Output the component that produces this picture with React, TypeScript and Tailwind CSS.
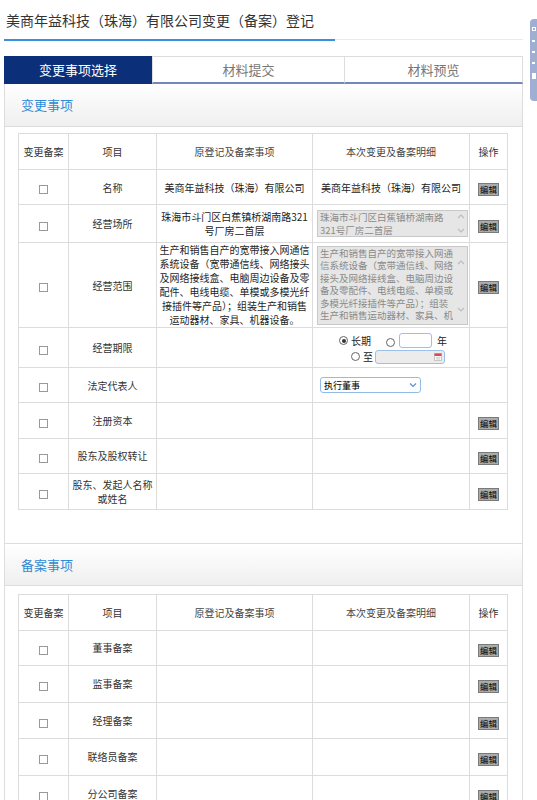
import React from "react";

const cell = "border border-[#dcdcdc] text-center align-middle p-0";

function Checkbox() {
  return <span className="inline-block w-[9px] h-[9px] border border-[#999] bg-white align-middle" />;
}

function EditBtn() {
  return (
    <span className="inline-flex items-center justify-center w-[21px] h-[13px] bg-[#ababab] border border-[#7a7a7a] text-[8.5px] leading-none text-black align-middle">
      编辑
    </span>
  );
}

function Radio({ checked }: { checked?: boolean }) {
  return (
    <span className="inline-flex items-center justify-center w-[9px] h-[9px] rounded-full border border-[#666] bg-white align-middle">
      {checked ? <span className="w-[4px] h-[4px] rounded-full bg-[#333]" /> : null}
    </span>
  );
}

function ScrollArrows({ upTop, downTop }: { upTop: string; downTop: string }) {
  return (
    <>
      <svg className={`absolute right-[2px] ${upTop}`} width="8" height="6" viewBox="0 0 8 6">
        <path d="M1 5 L4 2 L7 5" fill="none" stroke="#bdbdbd" strokeWidth="1.2" />
      </svg>
      <svg className={`absolute right-[2px] ${downTop}`} width="8" height="6" viewBox="0 0 8 6">
        <path d="M1 1 L4 4 L7 1" fill="none" stroke="#bdbdbd" strokeWidth="1.2" />
      </svg>
    </>
  );
}

function Header() {
  return (
    <tr className="h-[36px]">
      <td className={`${cell} text-[10px] text-[#333]`}>变更备案</td>
      <td className={`${cell} text-[10px] text-[#333]`}>项目</td>
      <td className={`${cell} text-[10px] text-[#444]`}>原登记及备案事项</td>
      <td className={`${cell} text-[10px] text-[#444]`}>本次变更及备案明细</td>
      <td className={`${cell} text-[10px] text-[#333]`}>操作</td>
    </tr>
  );
}

function Cols() {
  return (
    <colgroup>
      <col className="w-[50px]" />
      <col className="w-[88px]" />
      <col className="w-[156px]" />
      <col className="w-[157px]" />
      <col className="w-[38px]" />
    </colgroup>
  );
}

function SimpleRow({ label, h, edit = true }: { label: React.ReactNode; h: string; edit?: boolean }) {
  return (
    <tr className={h}>
      <td className={cell}><Checkbox /></td>
      <td className={`${cell} text-[10px] leading-[14px] text-[#333]`}>{label}</td>
      <td className={cell}></td>
      <td className={cell}></td>
      <td className={cell}>{edit ? <EditBtn /> : null}</td>
    </tr>
  );
}

function SectionBand({ title, top }: { title: string; top?: boolean }) {
  return (
    <div
      className={`h-[43px] flex items-center pl-[16px] bg-gradient-to-b from-white to-[#efefef] border-b border-[#dddddd] ${top ? "border-t" : ""}`}
    >
      <span className="text-[13px] text-[#2f8ad6]">{title}</span>
    </div>
  );
}

export default function App() {
  const scopeOrig = [
    "生产和销售自产的宽带接入网通信",
    "系统设备（宽带通信线、网络接头",
    "及网络接线盒、电脑周边设备及零",
    "配件、电线电缆、单模或多模光纤",
    "接插件等产品）；组装生产和销售",
    "运动器材、家具、机器设备。",
  ];
  const scopeNew = [
    "生产和销售自产的宽带接入网通",
    "信系统设备（宽带通信线、网络",
    "接头及网络接线盒、电脑周边设",
    "备及零配件、电线电缆、单模或",
    "多模光纤接插件等产品）；组装",
    "生产和销售运动器材、家具、机",
    "器设备。",
  ];

  return (
    <div className="relative w-[537px] min-h-[800px] bg-white text-[#333] font-['Noto_Sans_CJK_SC','Noto_Sans',sans-serif] overflow-hidden">
      {/* right floating tab */}
      <div className="absolute right-0 top-[19px] w-[7px] h-[82px] bg-[#9eafd3] rounded-l-[4px] flex flex-col items-center pt-[8px] gap-[9px]">
        <span className="w-[4px] h-[4px] border border-white" />
        <span className="w-[3px] h-[2px] bg-white" />
        <span className="w-[3px] h-[2px] bg-white" />
        <span className="w-[3px] h-[2px] bg-white" />
        <span className="w-[4px] h-[6px] bg-white" />
      </div>

      <div className="ml-[4px] w-[519px]">
        {/* title */}
        <div className="h-[39px] flex items-center pl-[2px] pt-[1px]">
          <span className="text-[14px] text-[#333]">美商年益科技（珠海）有限公司变更（备案）登记</span>
        </div>
        <div className="flex items-start h-[2px]">
          <div className="w-[331px] h-[2px] bg-[#3c8fdc]" />
          <div className="flex-1 h-[1px] bg-[#e1ecf7]" />
        </div>

        {/* tabs */}
        <div className="mt-[15px] flex h-[28px]">
          <div className="w-[148px] bg-[#0c2f79] flex items-center justify-center text-[13px] text-white">变更事项选择</div>
          <div className="w-[192px] border-t border-l border-[#dddddd] border-b-2 border-b-[#7489bb] flex items-center justify-center text-[13px] text-[#777]">材料提交</div>
          <div className="flex-1 border-t border-l border-r border-[#dddddd] border-b-2 border-b-[#7489bb] flex items-center justify-center text-[13px] text-[#777]">材料预览</div>
        </div>

        {/* panel */}
        <div className="border-x border-[#dddddd] pb-[40px]">
          <SectionBand title="变更事项" />
          <div className="pt-[6px] pl-[13px]">
            <table className="border-collapse table-fixed w-[489px]">
              <Cols />
              <tbody>
                <Header />
                <tr className="h-[35px]">
                  <td className={cell}><Checkbox /></td>
                  <td className={`${cell} text-[10px] text-[#333]`}>名称</td>
                  <td className={`${cell} text-[10px] text-[#222]`}>美商年益科技（珠海）有限公司</td>
                  <td className={`${cell} text-[10px] text-[#222]`}>美商年益科技（珠海）有限公司</td>
                  <td className={cell}><EditBtn /></td>
                </tr>
                <tr className="h-[38px]">
                  <td className={cell}><Checkbox /></td>
                  <td className={`${cell} text-[10px] text-[#333]`}>经营场所</td>
                  <td className={`${cell} text-[10px] leading-[14px] text-[#222]`}>
                    <div>珠海市斗门区白蕉镇桥湖南路321</div>
                    <div>号厂房二首层</div>
                  </td>
                  <td className={`${cell} text-left`}>
                    <div className="relative ml-[4px] w-[151px] h-[27px] border border-[#c9c9c9] bg-[#e6e6e6] overflow-hidden pl-[2px] text-[9.5px] leading-[12.5px] text-[#8a8a8a] whitespace-nowrap">
                      <div>珠海市斗门区白蕉镇桥湖南路</div>
                      <div>321号厂房二首层</div>
                      <ScrollArrows upTop="top-[2px]" downTop="top-[17px]" />
                    </div>
                  </td>
                  <td className={cell}><EditBtn /></td>
                </tr>
                <tr className="h-[85px]">
                  <td className={cell}><Checkbox /></td>
                  <td className={`${cell} text-[10px] text-[#333]`}>经营范围</td>
                  <td className={`${cell} text-[10px] leading-[14px] text-[#1e1e1e] whitespace-nowrap`}>
                    {scopeOrig.map((l, i) => (
                      <div key={i}>{l}</div>
                    ))}
                  </td>
                  <td className={`${cell} text-left`}>
                    <div className="relative ml-[4px] w-[151px] h-[79px] border border-[#c9c9c9] bg-[#e6e6e6] overflow-hidden pl-[2px] text-[9.5px] leading-[12.5px] text-[#8a8a8a] whitespace-nowrap">
                      {scopeNew.map((l, i) => (
                        <div key={i}>{l}</div>
                      ))}
                      <ScrollArrows upTop="top-[12px]" downTop="top-[60px]" />
                    </div>
                  </td>
                  <td className={cell}><EditBtn /></td>
                </tr>
                <tr className="h-[40px]">
                  <td className={cell}><Checkbox /></td>
                  <td className={`${cell} text-[10px] text-[#333]`}>经营期限</td>
                  <td className={cell}></td>
                  <td className={`${cell} align-top text-left`}>
                    <div className="flex flex-col pt-[5px]">
                      <div className="flex items-center h-[15px] pl-[26px] text-[10px] text-[#222]">
                        <Radio checked />
                        <span className="ml-[3px]">长期</span>
                        <span className="ml-[15px]"><Radio /></span>
                        <span className="ml-[4px] w-[33px] h-[15px] border border-[#9cc0ea] rounded-[3px] bg-white" />
                        <span className="ml-[5px]">年</span>
                      </div>
                      <div className="flex items-center h-[15px] mt-[1px] pl-[38px] text-[10px] text-[#222]">
                        <Radio />
                        <span className="ml-[3px]">至</span>
                        <span className="relative ml-[2px] w-[70px] h-[14px] border border-[#9cc0ea] rounded-[3px] bg-[#ececec]">
                          <svg className="absolute right-[2px] top-[2px]" width="8" height="8" viewBox="0 0 8 8">
                            <rect x="0.5" y="0.5" width="7" height="7" fill="#fff" stroke="#bbb" strokeWidth="0.8" />
                            <rect x="0.5" y="0.5" width="7" height="2.5" fill="#e0474c" />
                            <path d="M1.5 4.5 H6.5 M1.5 6 H6.5 M3 3.5 V7 M5 3.5 V7" stroke="#c8c8c8" strokeWidth="0.6" />
                          </svg>
                        </span>
                      </div>
                    </div>
                  </td>
                  <td className={cell}></td>
                </tr>
                <tr className="h-[35px]">
                  <td className={cell}><Checkbox /></td>
                  <td className={`${cell} text-[10px] text-[#333]`}>法定代表人</td>
                  <td className={cell}></td>
                  <td className={`${cell} text-left`}>
                    <div className="ml-[7px] w-[101px] h-[16px] border border-[#93bbea] rounded-[3px] bg-white flex items-center justify-between pl-[3px] pr-[3px]">
                      <span className="text-[9px] leading-none text-black">执行董事</span>
                      <svg width="8" height="6" viewBox="0 0 8 6">
                        <path d="M1 1.5 L4 4.5 L7 1.5" fill="none" stroke="#5b8fd0" strokeWidth="1.2" />
                      </svg>
                    </div>
                  </td>
                  <td className={cell}></td>
                </tr>
                <SimpleRow label="注册资本" h="h-[36px]" />
                <SimpleRow label="股东及股权转让" h="h-[35px]" />
                <SimpleRow
                  label={
                    <>
                      <div>股东、发起人名称</div>
                      <div>或姓名</div>
                    </>
                  }
                  h="h-[36px]"
                />
              </tbody>
            </table>
          </div>

          <div className="h-[33px]" />
          <SectionBand title="备案事项" top />
          <div className="pt-[8px] pl-[13px]">
            <table className="border-collapse table-fixed w-[489px]">
              <Cols />
              <tbody>
                <Header />
                <SimpleRow label="董事备案" h="h-[35px]" />
                <SimpleRow label="监事备案" h="h-[37px]" />
                <SimpleRow label="经理备案" h="h-[36px]" />
                <SimpleRow label="联络员备案" h="h-[37px]" />
                <SimpleRow label="分公司备案" h="h-[36px]" />
                <SimpleRow label="清算组备案" h="h-[36px]" />
              </tbody>
            </table>
          </div>
        </div>
      </div>
    </div>
  );
}
